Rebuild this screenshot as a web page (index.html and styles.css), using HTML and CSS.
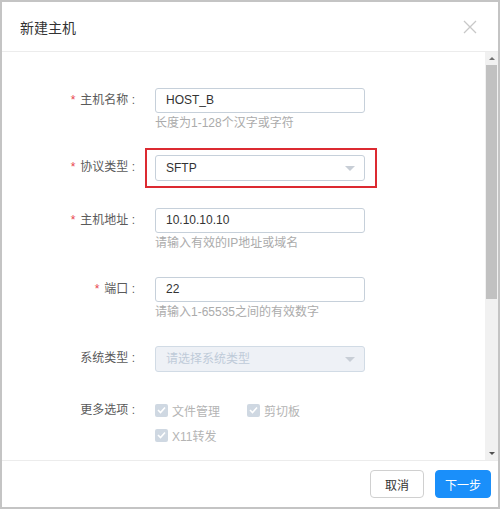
FILE: index.html
```html
<!DOCTYPE html>
<html lang="zh">
<head>
<meta charset="utf-8">
<link rel="stylesheet" href="styles.css">
</head>
<body>
<div class="dialog">
  <div class="header">
    <span class="title">新建主机</span>
    <svg class="close" width="14" height="14" viewBox="0 0 14 14"><path d="M1 1L13 13M13 1L1 13" stroke="#c8c8c8" stroke-width="1.3" fill="none"/></svg>
  </div>
  <div class="main">
    <div class="content">
      <div class="row r1">
        <div class="label"><span class="req">*</span>主机名称 :</div>
        <div class="field">
          <div class="input">HOST_B</div>
          <div class="help">长度为1-128个汉字或字符</div>
        </div>
      </div>
      <div class="row r2">
        <div class="label"><span class="req">*</span>协议类型 :</div>
        <div class="field">
          <div class="select">SFTP<span class="arrow"></span><div class="mark"></div></div>
        </div>
      </div>
      <div class="row r3">
        <div class="label"><span class="req">*</span>主机地址 :</div>
        <div class="field">
          <div class="input">10.10.10.10</div>
          <div class="help">请输入有效的IP地址或域名</div>
        </div>
      </div>
      <div class="row r4">
        <div class="label"><span class="req">*</span>端口 :</div>
        <div class="field">
          <div class="input">22</div>
          <div class="help">请输入1-65535之间的有效数字</div>
        </div>
      </div>
      <div class="row r5">
        <div class="label">系统类型 :</div>
        <div class="field">
          <div class="select disabled">请选择系统类型<span class="arrow"></span></div>
        </div>
      </div>
      <div class="row r6">
        <div class="label lh">更多选项 :</div>
        <div class="field checks">
          <label class="check c1"><span class="box"><svg width="9" height="8" viewBox="0 0 9 8"><path d="M1 4L3.5 6.5L8 1.5" stroke="#fff" stroke-width="1.6" fill="none"/></svg></span>文件管理</label>
          <label class="check c2"><span class="box"><svg width="9" height="8" viewBox="0 0 9 8"><path d="M1 4L3.5 6.5L8 1.5" stroke="#fff" stroke-width="1.6" fill="none"/></svg></span>剪切板</label>
          <label class="check"><span class="box"><svg width="9" height="8" viewBox="0 0 9 8"><path d="M1 4L3.5 6.5L8 1.5" stroke="#fff" stroke-width="1.6" fill="none"/></svg></span>X11转发</label>
        </div>
      </div>
    </div>
    <div class="scrollbar">
      <div class="sb-btn"><span class="up"></span></div>
      <div class="track"><div class="thumb"></div></div>
      <div class="sb-btn"><span class="down"></span></div>
    </div>
  </div>
  <div class="footer">
    <button class="btn">取消</button>
    <button class="btn primary">下一步</button>
  </div>
</div>
</body>
</html>
```
FILE: styles.css
```css
html, body {
  margin: 0;
  padding: 0;
  background: #fff;
}
body {
  font-family: "Liberation Sans", "Noto Sans CJK SC", sans-serif;
  font-size: 12px;
}
.dialog {
  width: 500px;
  height: 509px;
  box-sizing: border-box;
  border: 2px solid #c4c4c4;
  display: flex;
  flex-direction: column;
  background: #fff;
}
.header {
  height: 49px;
  border-bottom: 1px solid #ececec;
  display: flex;
  align-items: center;
  justify-content: space-between;
  padding: 0 21px 0 18px;
  flex: none;
}
.title {
  font-size: 14px;
  color: #333;
}
.main {
  flex: 1;
  display: flex;
  min-height: 0;
}
.content {
  flex: 1;
  padding-top: 36px;
}
.row {
  display: flex;
  align-items: flex-start;
}
.label {
  width: 141px;
  box-sizing: border-box;
  padding-right: 8px;
  text-align: right;
  color: #5a5a5a;
  height: 25px;
  line-height: 24px;
  flex: none;
}
.req {
  color: #e8464f;
  margin-right: 5px;
  font-size: 12px;
}
.field {
  margin-left: 12px;
  width: 210px;
  position: relative;
}
.input, .select {
  box-sizing: border-box;
  height: 25px;
  line-height: 23px;
  border: 1px solid #c6d0da;
  border-radius: 3px;
  padding: 0 10px;
  color: #333;
  background: #fff;
  position: relative;
}
.select {
  height: 26px;
  line-height: 24px;
}
.select.disabled {
  background: #eef1f6;
  border-color: #d1dbe5;
  color: #bfcbd9;
}
.arrow {
  position: absolute;
  right: 9px;
  top: 10px;
  width: 0;
  height: 0;
  border-left: 5px solid transparent;
  border-right: 5px solid transparent;
  border-top: 5px solid #c8ced6;
}
.mark {
  position: absolute;
  left: -11px;
  right: -13px;
  top: -8px;
  bottom: -8px;
  border: 2px solid #dc2a31;
}
.help {
  color: #ababab;
  line-height: 18px;
  margin-top: 1px;
}
.r1 { margin-bottom: 23px; }
.r2 { margin-bottom: 27px; }
.r3 { margin-bottom: 25px; }
.r4 { margin-bottom: 25px; }
.r5 { margin-bottom: 29px; }
.lh {
  height: 18px;
  line-height: 18px;
}
.checks {
  display: flex;
  flex-wrap: wrap;
  row-gap: 7px;
}
.check {
  display: flex;
  align-items: center;
  height: 18px;
  color: #b4b4b4;
}
.c1 {
  width: 92px;
}
.c2 {
  width: 100px;
}
.box {
  width: 13px;
  height: 13px;
  box-sizing: border-box;
  background: #cfd8e2;
  border-radius: 2px;
  display: flex;
  align-items: center;
  justify-content: center;
  margin-right: 4px;
}
.scrollbar {
  width: 13px;
  background: #f1f1f1;
  display: flex;
  flex-direction: column;
  flex: none;
}
.sb-btn {
  height: 13px;
  display: flex;
  align-items: center;
  justify-content: center;
}
.up {
  width: 0; height: 0;
  border-left: 3px solid transparent;
  border-right: 3px solid transparent;
  border-bottom: 3px solid #707070;
}
.down {
  width: 0; height: 0;
  border-left: 3px solid transparent;
  border-right: 3px solid transparent;
  border-top: 3px solid #505050;
}
.track {
  flex: 1;
  padding: 0 1px;
}
.thumb {
  height: 234px;
  background: #c1c1c1;
}
.footer {
  height: 46px;
  border-top: 1px solid #ececec;
  display: flex;
  align-items: center;
  justify-content: flex-end;
  gap: 11px;
  padding-right: 7px;
  flex: none;
}
.btn {
  font-family: "Liberation Sans", "Noto Sans CJK SC", sans-serif;
  font-size: 12px;
  height: 28px;
  width: 54px;
  border: 1px solid #d0d0d0;
  border-radius: 4px;
  background: #fff;
  color: #333;
  padding: 0;
}
.btn.primary {
  width: 56px;
  background: #1a8ffa;
  border-color: #1a8ffa;
  color: #fff;
}
```
